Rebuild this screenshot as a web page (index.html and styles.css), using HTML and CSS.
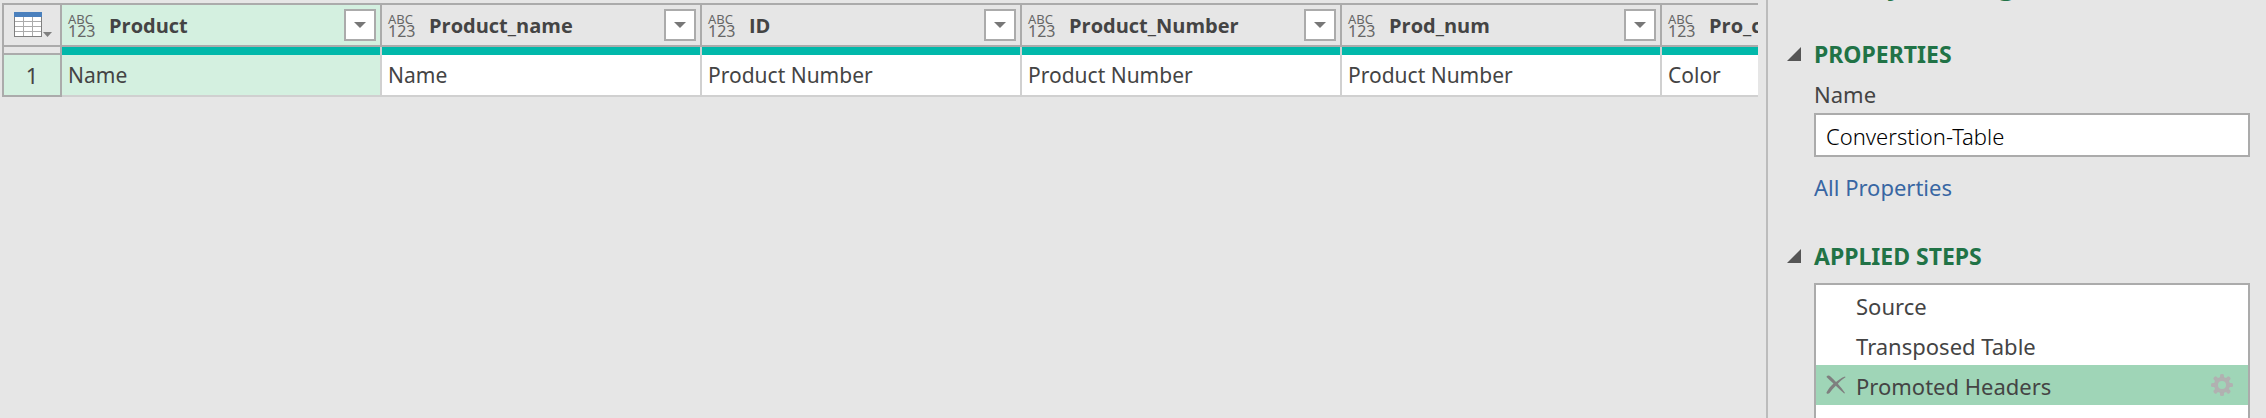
FILE: index.html
```html
<!DOCTYPE html>
<html lang="en">
<head>
<meta charset="utf-8">
<title>Query Editor</title>
<link rel="stylesheet" href="styles.css">
</head>
<body>
<div class="editor">
  <main class="grid-pane">
    <table class="grid">
      <colgroup>
        <col class="col-index"><col class="col-data"><col class="col-data"><col class="col-data"><col class="col-data"><col class="col-data"><col class="col-data">
      </colgroup>
      <thead>
        <tr class="head-row">
          <th class="corner">
            <button class="table-menu" type="button" aria-label="Table options">
              <svg width="40" height="26" viewBox="0 0 40 26">
                <rect x="1" y="1" width="26" height="23" fill="#fff"/>
                <path d="M9.500 5v19M18.500 5v19M1 9.500h26M1 14.500h26M1 19.500h26" stroke="#ababab" stroke-width="1" fill="none"/>
                <rect x=".5" y="1" width="27" height="23.500" fill="none" stroke="#7f7f7f"/>
                <rect width="28" height="5" fill="#4a80bd"/>
                <path d="M29 20h9l-4.500 5z" fill="#7f7f7f"/>
              </svg>
            </button>
          </th>
          <th class="selected"><div class="head"><span class="type"><span class="abc">ABC</span><span class="num">123</span></span><span class="title">Product</span><button class="filter" type="button" aria-label="Filter Product"><svg width="12" height="6" viewBox="0 0 12 6"><path d="M0 0h12L6 6z"/></svg></button></div></th>
          <th><div class="head"><span class="type"><span class="abc">ABC</span><span class="num">123</span></span><span class="title">Product_name</span><button class="filter" type="button" aria-label="Filter Product_name"><svg width="12" height="6" viewBox="0 0 12 6"><path d="M0 0h12L6 6z"/></svg></button></div></th>
          <th><div class="head"><span class="type"><span class="abc">ABC</span><span class="num">123</span></span><span class="title">ID</span><button class="filter" type="button" aria-label="Filter ID"><svg width="12" height="6" viewBox="0 0 12 6"><path d="M0 0h12L6 6z"/></svg></button></div></th>
          <th><div class="head"><span class="type"><span class="abc">ABC</span><span class="num">123</span></span><span class="title">Product_Number</span><button class="filter" type="button" aria-label="Filter Product_Number"><svg width="12" height="6" viewBox="0 0 12 6"><path d="M0 0h12L6 6z"/></svg></button></div></th>
          <th><div class="head"><span class="type"><span class="abc">ABC</span><span class="num">123</span></span><span class="title">Prod_num</span><button class="filter" type="button" aria-label="Filter Prod_num"><svg width="12" height="6" viewBox="0 0 12 6"><path d="M0 0h12L6 6z"/></svg></button></div></th>
          <th><div class="head"><span class="type"><span class="abc">ABC</span><span class="num">123</span></span><span class="title">Pro_color</span><button class="filter" type="button" aria-label="Filter Pro_color"><svg width="12" height="6" viewBox="0 0 12 6"><path d="M0 0h12L6 6z"/></svg></button></div></th>
        </tr>
        <tr class="quality-row">
          <td class="index"></td><td></td><td></td><td></td><td></td><td></td><td></td>
        </tr>
      </thead>
      <tbody>
        <tr class="data-row">
          <th class="index" scope="row">1</th>
          <td class="selected">Name</td>
          <td>Name</td>
          <td>Product Number</td>
          <td>Product Number</td>
          <td>Product Number</td>
          <td>Color</td>
        </tr>
      </tbody>
    </table>
  </main>

  <aside class="settings">
    <h1 class="settings-title">Query Settings</h1>
    <section class="section">
      <h2 class="section-title"><svg class="toggle" width="14" height="14" viewBox="0 0 14 14"><path d="M14 0v14H0z"/></svg>PROPERTIES</h2>
      <div class="properties">
        <label class="name-label" for="query-name">Name</label>
        <input class="name-input" id="query-name" type="text" value="Converstion-Table" spellcheck="false">
        <a class="all-link" href="#">All Properties</a>
      </div>
    </section>
    <section class="section steps-section">
      <h2 class="section-title"><svg class="toggle" width="14" height="14" viewBox="0 0 14 14"><path d="M14 0v14H0z"/></svg>APPLIED STEPS</h2>
      <ul class="steps">
        <li class="step">Source</li>
        <li class="step">Transposed Table</li>
        <li class="step current">
          <button class="icon-button" type="button" aria-label="Delete step"><svg width="20" height="20" viewBox="0 0 20 20"><path d="M.5 2C1 .5 3 0 4.500 1.500c2 1.700 3.800 3.500 5.500 5.500 2.500-2.200 5.500-4.200 9-5.500l.5.800C16.500 4.300 14 6.400 11.800 8.700c2.700 3 5 6 7.200 9.300l-.8.500C15.500 16 12.500 13.300 9.800 10.700 7.500 13 5.300 15.600 3.500 18c-1 1.200-3.200 1-3-.6C2.300 14 4.800 11 7.500 8.500 5 6.200 2.500 4 .5 2z" fill="#7f7f7f"/></svg></button>
          <span class="step-name">Promoted Headers</span>
          <button class="icon-button" type="button" aria-label="Step settings"><svg width="22" height="22" viewBox="-11 -11 22 22"><g fill="#b1b1b1"><g id="teeth"><rect x="-2" y="-11" width="4" height="22" rx="1.500"/><rect x="-11" y="-2" width="22" height="4" rx="1.500"/></g><use href="#teeth" transform="rotate(45)"/><circle r="8"/></g><circle r="4" fill="#9fd5b7"/></svg></button>
        </li>
      </ul>
    </section>
  </aside>
</div>
</body>
</html>
```
FILE: styles.css
```css
* {
  box-sizing: border-box;
}

body {
  margin: 0;
  background: #e6e6e6;
  color: #444;
  font-family: "Noto Sans", "Open Sans", sans-serif;
  font-size: 20px;
}

button {
  margin: 0;
  padding: 0;
  border: 0;
  background: none;
  font: inherit;
}

svg {
  display: block;
}

.editor {
  display: flex;
  height: 100vh;
  overflow: hidden;
}

/* Data grid */

.grid-pane {
  flex: 1;
  min-width: 0;
  margin-right: 8px;
  padding: 3px 0 0 2px;
  overflow: hidden;
}

.grid {
  width: 1980px;
  table-layout: fixed;
  border-collapse: separate;
  border-spacing: 0;
}

.col-index {
  width: 60px;
}

.col-data {
  width: 320px;
}

.grid th,
.grid td {
  padding: 0;
  text-align: left;
}

.head-row th {
  height: 44px;
  border: solid #ababab;
  border-width: 2px 2px 2px 0;
}

.head-row .corner {
  border-left-width: 2px;
}

.table-menu {
  display: block;
  padding-left: 10px;
}

.head {
  display: flex;
  align-items: center;
  padding: 0 4px 0 6px;
}

.type {
  display: flex;
  flex-direction: column;
  width: 28px;
  margin-right: 13px;
  color: #666;
  font-weight: 400;
}

.abc {
  font-size: 13px;
  line-height: 12px;
}

.num {
  font-size: 16px;
  line-height: 13px;
}

.title {
  flex: 1;
  padding-top: 2px;
  font-family: "Open Sans", "Noto Sans", sans-serif;
  line-height: 28px;
  font-weight: 700;
}

.filter {
  display: flex;
  align-items: center;
  justify-content: center;
  width: 32px;
  height: 32px;
  border: 2px solid #ababab;
  background: #fff;
  fill: #777;
}

.quality-row td {
  height: 8px;
  border-right: 2px solid #d0d0d0;
  background: #01b8aa;
}

.quality-row .index {
  border: solid #ababab;
  border-width: 0 2px 2px;
  background: #e6e6e6;
}

.data-row td {
  height: 42px;
  padding-left: 6px;
  border: solid #d0d0d0;
  border-width: 0 2px 2px 0;
  background: #fff;
  font-size: 21px;
  line-height: 28px;
}

.data-row .index {
  border: solid #ababab;
  border-width: 0 2px 2px;
  background: #d4f0e0;
  font-size: 22px;
  line-height: 28px;
  font-weight: 400;
  text-align: center;
}

.grid .selected {
  background: #d4f0e0;
}

/* Query settings panel */

.settings {
  display: flex;
  flex-direction: column;
  flex: none;
  width: 500px;
  padding-right: 16px;
  border-left: 2px solid #bcbcbc;
  font-size: 22px;
}

.settings-title {
  margin: -37px 0 0;
  padding-left: 46px;
  color: #217346;
  font-size: 30px;
  line-height: 40px;
  font-weight: 600;
}

.section {
  display: flex;
  flex-direction: column;
  padding-top: 35px;
}

.section-title {
  display: flex;
  align-items: center;
  gap: 13px;
  margin: 0;
  padding-left: 19px;
  color: #217346;
  font-size: 23px;
  line-height: 32px;
  font-weight: 700;
}

.toggle {
  fill: #555;
}

.properties {
  display: flex;
  flex-direction: column;
  align-items: flex-start;
  padding-left: 46px;
}

.name-label {
  margin-top: 6px;
  padding-bottom: 1px;
  line-height: 36px;
}

.name-input {
  width: 100%;
  height: 44px;
  padding: 2px 10px 0;
  border: 2px solid #ababab;
  border-radius: 0;
  background: #fff;
  color: #000;
  font: inherit;
  font-weight: 300;
}

.all-link {
  margin-top: 12px;
  color: #3866a3;
  line-height: 36px;
  text-decoration: none;
}

.steps-section {
  flex: 1;
}

.steps {
  flex: 1;
  margin: 11px 0 0 46px;
  padding: 0;
  border: 2px solid #ababab;
  border-bottom: 0;
  background: #fff;
  list-style: none;
}

.step {
  height: 40px;
  padding-left: 40px;
  line-height: 42px;
}

.current {
  display: flex;
  align-items: center;
  gap: 10px;
  padding: 0 15px 0 10px;
  background: #9fd5b7;
}

.step-name {
  flex: 1;
  padding-top: 2px;
  line-height: 40px;
}
```
